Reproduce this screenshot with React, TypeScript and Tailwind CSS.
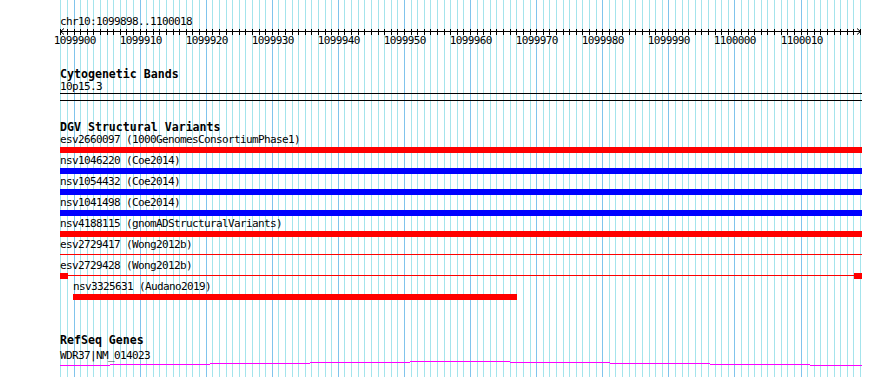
const START = 1099898
const X0 = 60.3
const BP = 6.609

const gridX = (k: number) => Math.round(X0 + k * BP)

const variants = [
  { label: 'esv2660097 (1000GenomesConsortiumPhase1)', color: 'bg-[#ff0000]' },
  { label: 'nsv1046220 (Coe2014)', color: 'bg-[#0000ff]' },
  { label: 'nsv1054432 (Coe2014)', color: 'bg-[#0000ff]' },
  { label: 'nsv1041498 (Coe2014)', color: 'bg-[#0000ff]' },
  { label: 'nsv4188115 (gnomADStructuralVariants)', color: 'bg-[#ff0000]' },
]

const geneSteps = [
  [60, 110, 366],
  [110, 210, 365],
  [210, 310, 364],
  [310, 410, 363],
  [410, 510, 362],
  [510, 610, 363],
  [610, 710, 364],
  [710, 810, 365],
  [810, 862, 366],
]

function Grid() {
  const lines = []
  for (let k = 0; k <= 121; k++) {
    const major = (START + k) % 10 === 0
    lines.push(
      <line
        key={k}
        x1={gridX(k) + 0.5}
        x2={gridX(k) + 0.5}
        y1={0}
        y2={377}
        stroke={major ? '#80c4ec' : '#a4e4ec'}
        strokeWidth={1}
      />
    )
  }
  return (
    <svg className="absolute inset-0" width={890} height={377} shapeRendering="crispEdges">
      {lines}
    </svg>
  )
}

function Ruler() {
  const ticks = []
  const labels = []
  for (let k = 0; k <= 121; k++) {
    const x = gridX(k) - 60 + 0.5
    ticks.push(<line key={k} x1={x} x2={x} y1={1} y2={7} stroke="#000" />)
    if ((START + k) % 10 === 0) {
      labels.push(
        <text key={k} x={x + 0.3} y={16} textAnchor="middle" fontSize={11} letterSpacing={-0.62} fill="#000">
          {START + k}
        </text>
      )
    }
  }
  return (
    <svg
      width={802}
      height={20}
      className="block overflow-visible font-['DejaVu_Sans_Mono',monospace]"
    >
      <g shapeRendering="crispEdges">
        <line x1={0} x2={801} y1={3.5} y2={3.5} stroke="#000" />
        {ticks}
      </g>
      <polyline points="4,0.5 0.5,3.5 4,6.5" fill="none" stroke="#000" />
      <polyline points="797,0.5 800.5,3.5 797,6.5" fill="none" stroke="#000" />
      {labels}
    </svg>
  )
}

function Title({ children, className }: { children: React.ReactNode; className: string }) {
  return (
    <div className={`font-bold text-[11.6px] tracking-normal text-black whitespace-nowrap ${className}`}>
      {children}
    </div>
  )
}

function Label({ children, className = '' }: { children: React.ReactNode; className?: string }) {
  return <div className={`h-[14px] leading-[14px] whitespace-nowrap ${className}`}>{children}</div>
}

export default function App() {
  return (
    <div className="relative w-[890px] h-[377px] bg-white overflow-hidden">
      <Grid />
      <div className="relative w-[862px] pl-[60px] pt-[15px] text-[11px] tracking-[-0.62px] text-black font-['DejaVu_Sans_Mono',monospace]">
        <div className="h-[13px] leading-[13px]">chr10:1099898..1100018</div>
        <Ruler />

        <Title className="mt-[20px] h-[12px] leading-[12px]">Cytogenetic Bands</Title>
        <div className="h-[13px] leading-[13px]">10p15.3</div>
        <div className="h-px bg-black" />
        <div className="h-px bg-black mt-[6px]" />

        <Title className="mt-[21px] h-[11px] leading-[11px]">DGV Structural Variants</Title>
        {variants.map((v) => (
          <div key={v.label} className="mb-px">
            <Label>{v.label}</Label>
            <div className={`h-[6px] ${v.color}`} />
          </div>
        ))}
        <div className="mb-px">
          <Label>esv2729417 (Wong2012b)</Label>
          <div className="h-[6px] pt-[2px]">
            <div className="h-px bg-[#ff0000]" />
          </div>
        </div>
        <div className="mb-px">
          <Label>esv2729428 (Wong2012b)</Label>
          <div className="h-[6px] flex items-start">
            <div className="w-[8px] h-[6px] bg-[#ff0000]" />
            <div className="flex-1 h-px mt-[2px] bg-[#ff0000]" />
            <div className="w-[8px] h-[6px] bg-[#ff0000]" />
          </div>
        </div>
        <div className="mb-px pl-[13px]">
          <Label>nsv3325631 (Audano2019)</Label>
          <div className="h-[6px] w-[444px] bg-[#ff0000]" />
        </div>

        <Title className="mt-[34px] h-[15px] leading-[12px]">RefSeq Genes</Title>
        <div className="h-[11px] leading-[13px]">WDR37|NM_014023</div>
        <svg width={802} height={8} className="block" shapeRendering="crispEdges">
          {geneSteps.map(([a, b, y]) => (
            <line key={a} x1={a - 60} x2={b - 60} y1={y - 361 + 0.5} y2={y - 361 + 0.5} stroke="#ff00ff" />
          ))}
        </svg>
      </div>
    </div>
  )
}
